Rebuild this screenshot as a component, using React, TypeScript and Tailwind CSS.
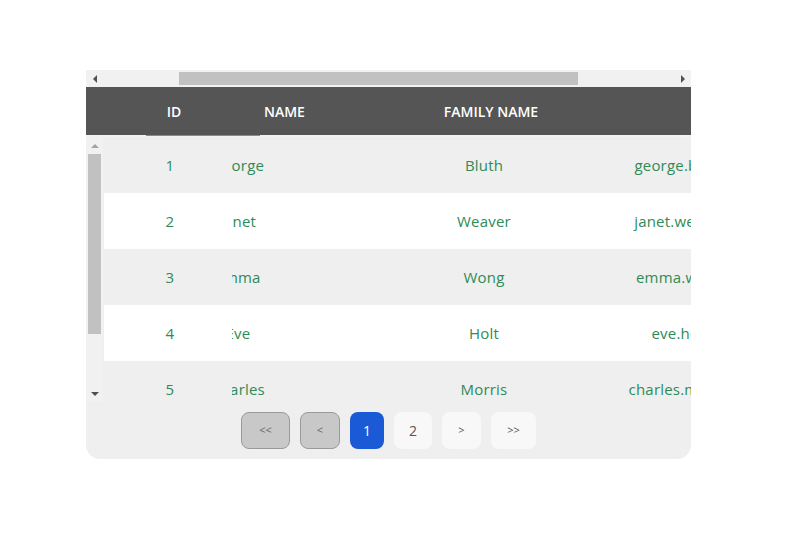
import React from "react";

type User = { id: number; name: string; last: string; email: string };

const users: User[] = [
  { id: 1, name: "George", last: "Bluth", email: "george.bluth@reqres.in" },
  { id: 2, name: "Janet", last: "Weaver", email: "janet.weaver@reqres.in" },
  { id: 3, name: "Emma", last: "Wong", email: "emma.wong@reqres.in" },
  { id: 4, name: "Eve", last: "Holt", email: "eve.holt@reqres.in" },
  { id: 5, name: "Charles", last: "Morris", email: "charles.morris@reqres.in" },
];

const Arrow = ({ dir, light }: { dir: "l" | "r" | "u" | "d"; light?: boolean }) => {
  const pts = {
    l: "5,1 5,9 1,5",
    r: "1,1 1,9 5,5",
    u: "1,5 9,5 5,1",
    d: "1,1 9,1 5,5",
  }[dir];
  const size = dir === "l" || dir === "r" ? { w: 6, h: 10 } : { w: 10, h: 6 };
  return (
    <svg width={size.w} height={size.h} viewBox={`0 0 ${size.w} ${size.h}`}>
      <polygon points={pts} fill={light ? "#a3a3a3" : "#505050"} />
    </svg>
  );
};

const PageButton = ({
  label,
  width,
  variant,
  small,
}: {
  label: string;
  width: string;
  variant: "disabled" | "active" | "plain";
  small?: boolean;
}) => {
  const base = "h-[37px] rounded-[8px] flex items-center justify-center";
  const styles = {
    disabled: "bg-[#c8c8c8] border border-[#9a9a9a] text-[#666]",
    active: "bg-[#1a5ad7] text-white",
    plain: "bg-[#f8f8f8] text-[#555]",
  }[variant];
  const size = small ? "text-[11px]" : "text-[14px]";
  return <div className={`${base} ${styles} ${size} ${width}`}>{label}</div>;
};

export default function App() {
  return (
    <div
      className="w-[812px] h-[560px] bg-white pt-[70px] pl-[86px]"
      style={{ fontFamily: '"Open Sans", "Liberation Sans", sans-serif' }}
    >
      <div className="w-[605px] bg-[#efefef] rounded-b-[14px] overflow-hidden">
        {/* horizontal scrollbar */}
        <div className="h-[17px] flex items-center bg-[#f1f1f1]">
          <div className="w-[17px] h-full flex items-center justify-center">
            <Arrow dir="l" />
          </div>
          <div className="flex-1 h-full flex items-center pl-[76px] pr-[96px]">
            <div className="h-[13px] w-full bg-[#c1c1c1]" />
          </div>
          <div className="w-[17px] h-full flex items-center justify-center">
            <Arrow dir="r" />
          </div>
        </div>

        {/* header */}
        <div className="h-[48px] bg-[#555555] flex items-center overflow-hidden text-white text-[14px] font-semibold">
          <div className="w-[18px] shrink-0" />
          <div className="w-[140px] shrink-0 text-center">ID</div>
          <div className="w-[156px] shrink-0 pl-[20px]">NAME</div>
          <div className="w-[182px] shrink-0 text-center">FAMILY NAME</div>
          <div className="w-[296px] shrink-0 text-center">EMAIL</div>
        </div>
        <div className="h-[2px] bg-[#f2f2f2] flex">
          <div className="w-[60px]" />
          <div className="w-[114px] h-[1px] bg-[#8a8a8a]" />
        </div>

        {/* body */}
        <div className="h-[265px] flex">
          <div className="w-[17px] shrink-0 flex flex-col items-center bg-[#f1f1f1]">
            <div className="h-[17px] flex items-center justify-center">
              <Arrow dir="u" light />
            </div>
            <div className="w-[13px] h-[180px] bg-[#c1c1c1]" />
            <div className="flex-1" />
            <div className="h-[17px] flex items-center justify-center">
              <Arrow dir="d" />
            </div>
          </div>
          <div className="w-[1px] shrink-0" />
          <div className="flex-1 overflow-hidden">
            {users.map((u, i) => (
              <div
                key={u.id}
                className={`h-[56px] flex items-center text-[15px] tracking-[0.2px] text-[#2e8b57] whitespace-nowrap ${
                  i % 2 === 1 ? "bg-white" : "bg-[#efefef]"
                }`}
              >
                <div className="w-[128px] shrink-0 pl-[4px] text-center">{u.id}</div>
                <div className="w-[168px] shrink-0 overflow-hidden">
                  <div className="w-[76px] -ml-[32px] text-center">{u.name}</div>
                </div>
                <div className="w-[168px] shrink-0 text-center">{u.last}</div>
                <div className="w-[302px] shrink-0 text-center">{u.email}</div>
              </div>
            ))}
          </div>
        </div>

        {/* pagination */}
        <div className="h-[57px] flex items-center justify-center gap-[10px]">
          <PageButton label="<<" width="w-[49px]" variant="disabled" small />
          <PageButton label="<" width="w-[40px]" variant="disabled" small />
          <PageButton label="1" width="w-[34px]" variant="active" />
          <PageButton label="2" width="w-[38px]" variant="plain" />
          <PageButton label=">" width="w-[39px]" variant="plain" small />
          <PageButton label=">>" width="w-[45px]" variant="plain" small />
        </div>
      </div>
    </div>
  );
}
